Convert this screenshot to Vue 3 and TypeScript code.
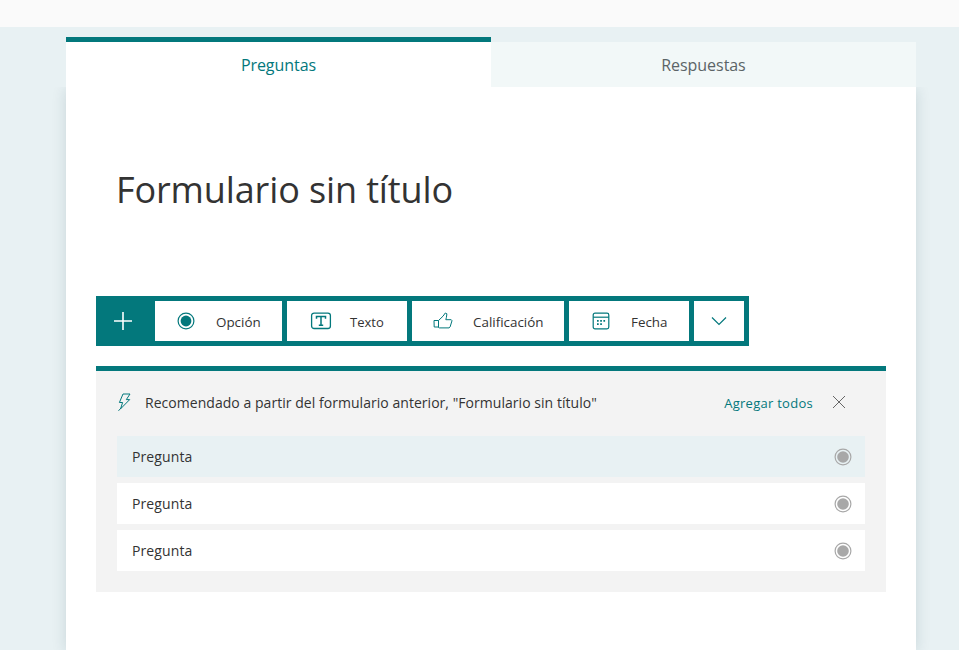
<script setup lang="ts">
const rows = [
  { label: "Pregunta", active: true },
  { label: "Pregunta", active: false },
  { label: "Pregunta", active: false },
];
</script>

<template>
  <div class="page">
    <div class="topbar"></div>
    <main class="content">
      <div class="tabs">
        <div class="tab tab-active">Preguntas</div>
        <div class="tab">Respuestas</div>
      </div>
      <section class="card">
        <h1 class="title">Formulario sin título</h1>

        <div class="toolbar">
          <button class="add" aria-label="Agregar">
            <svg width="20" height="20" viewBox="0 0 20 20">
              <path d="M10 1v18M1 10h18" stroke="#fff" stroke-width="1.6" fill="none" />
            </svg>
          </button>
          <button class="tool tool-option">
            <svg class="tool-icon" width="18" height="18" viewBox="0 0 18 18">
              <circle cx="9" cy="9" r="7.9" fill="none" stroke="#03787c" stroke-width="1.2" />
              <circle cx="9" cy="9" r="5.4" fill="#03787c" />
            </svg>
            <span>Opción</span>
          </button>
          <button class="tool tool-text">
            <svg class="tool-icon" width="22" height="18" viewBox="0 0 22 18">
              <rect x="1.6" y="1.1" width="18.8" height="15.4" rx="2.5" fill="none" stroke="#03787c" stroke-width="1.3" />
              <path d="M6.5 6.8V4.6h9v2.2M11 4.6v8.6M8.8 13.2h4.4" fill="none" stroke="#03787c" stroke-width="1.5" />
            </svg>
            <span class="label-narrow">Texto</span>
          </button>
          <button class="tool tool-rate">
            <svg class="tool-icon" width="20" height="18" viewBox="0 0 20 18">
              <path d="M1 8.5h4.5L10 4.2 12.3 1l1.6.8-.5 3.6-.6 2.3h5.4l.8 1-1.9 6.2-1 1H6.5L5 15H1.2z" fill="none" stroke="#03787c" stroke-width="1" stroke-linejoin="round" />
              <path d="M5.5 8.5V15" stroke="#03787c" stroke-width="1" />
            </svg>
            <span>Calificación</span>
          </button>
          <button class="tool tool-date">
            <svg class="tool-icon" width="18" height="18" viewBox="0 0 18 18">
              <rect x="1.2" y="1.2" width="15.6" height="15.6" rx="1.8" fill="none" stroke="#03787c" stroke-width="1.2" />
              <path d="M1.2 5.2h15.6" stroke="#03787c" stroke-width="1.2" />
              <path d="M5 8h1.7v1.7H5zM8.2 8h1.7v1.7H8.2zM11.4 8h1.7v1.7h-1.7zM5 11.2h1.7v1.7H5zM8.2 11.2h1.7v1.7H8.2z" fill="#03787c" />
            </svg>
            <span>Fecha</span>
          </button>
          <button class="tool tool-more" aria-label="Más">
            <svg width="16" height="10" viewBox="0 0 16 10">
              <path d="M1 1.5l7 7 7-7" fill="none" stroke="#03787c" stroke-width="1.2" />
            </svg>
          </button>
        </div>

        <div class="suggest">
          <div class="suggest-head">
            <svg class="bolt" width="14" height="19" viewBox="0 0 14 19">
              <path d="M6 1h7L9.3 6.6h3.4L3.6 15.8l2-6.3H2.4z" fill="none" stroke="#03787c" stroke-width="1" stroke-linejoin="round" />
              <path d="M4.4 14.6L1.5 17.8" stroke="#03787c" stroke-width="1" />
            </svg>
            <span class="suggest-text">Recomendado a partir del formulario anterior, "Formulario sin título"</span>
            <a class="add-all">Agregar todos</a>
            <svg class="close" width="14" height="14" viewBox="0 0 14 14">
              <path d="M1 1l12 12M13 1L1 13" stroke="#666" stroke-width="1" fill="none" />
            </svg>
          </div>
          <div class="rows">
            <div v-for="(row, i) in rows" :key="i" class="row" :class="{ 'row-active': row.active }">
              <span>{{ row.label }}</span>
              <svg width="18" height="18" viewBox="0 0 18 18">
                <circle cx="9" cy="9" r="7.9" fill="none" stroke="#a8a8a8" stroke-width="1.2" />
                <circle cx="9" cy="9" r="5.8" fill="#a8a8a8" />
              </svg>
            </div>
          </div>
        </div>
      </section>
    </main>
  </div>
</template>

<style scoped>
.page {
  height: 650px;
  overflow: hidden;
  background: #e8f1f3;
  font-family: "Open Sans", "Noto Sans", sans-serif;
  color: #333;
}

.topbar {
  height: 27px;
  background: #fafafa;
}

.content {
  width: 850px;
  margin-left: 66px;
  padding-top: 10px;
}

.tabs {
  display: flex;
  align-items: flex-end;
  height: 50px;
}

.tab {
  width: 425px;
  height: 45px;
  box-sizing: border-box;
  display: flex;
  align-items: center;
  justify-content: center;
  background: #f2f8f8;
  color: #5b6467;
  font-size: 16px;
  letter-spacing: -0.05px;
}

.tab-active {
  height: 50px;
  border-top: 5px solid #03787c;
  background: #fff;
  color: #03787c;
}

.card {
  height: 563px;
  padding: 0 30px;
  background: #fff;
  box-shadow: 0 2px 14px rgba(0, 60, 70, 0.14);
  clip-path: inset(0 -20px -20px -20px);
}

.title {
  margin: 0;
  padding: 78px 0 0 20px;
  height: 131px;
  font-size: 36px;
  font-weight: 400;
  line-height: 50px;
  color: #333;
  letter-spacing: -0.12px;
}

.toolbar {
  display: flex;
  gap: 5px;
  width: 653px;
  height: 50px;
  box-sizing: border-box;
  padding: 5px 5px 5px 0;
  background: #03787c;
}

.toolbar button {
  border: none;
  padding: 0;
  font-family: inherit;
  cursor: pointer;
}

.toolbar .add {
  width: 54px;
  background: transparent;
  display: flex;
  align-items: center;
  justify-content: center;
}

.tool {
  display: flex;
  align-items: center;
  background: #fff;
  color: #333;
  font-size: 13.4px;
}

.tool span {
  padding-top: 2px;
}

.tool .label-narrow {
  font-size: 13px;
}

.tool-option { width: 127px; }
.tool-text { width: 120px; }
.tool-rate { width: 152px; }
.tool-date { width: 120px; }
.tool-more { width: 50px; justify-content: center; }

.tool-option .tool-icon { margin: 0 21px 0 22px; }
.tool-text .tool-icon { margin: 0 18px 0 23px; }
.tool-rate .tool-icon { margin: 0 20px 0 21px; }
.tool-date .tool-icon { margin: 0 21px 0 23px; }

.suggest {
  margin-top: 20px;
  width: 790px;
  height: 226px;
  box-sizing: border-box;
  border-top: 5px solid #03787c;
  padding: 0 21px;
  background: #f3f3f3;
}

.suggest-head {
  display: flex;
  align-items: center;
  height: 65px;
  padding-bottom: 3px;
  box-sizing: border-box;
  font-size: 14px;
}

.bolt {
  margin-right: 14px;
}

.suggest-text {
  flex: 1;
  letter-spacing: 0.04px;
}

.add-all {
  color: #03787c;
  font-size: 13px;
  letter-spacing: 0.27px;
  margin-right: 19px;
  padding-top: 2px;
}

.close {
  margin-right: 19px;
}

.rows {
  display: flex;
  flex-direction: column;
  gap: 6px;
}

.row {
  display: flex;
  align-items: center;
  justify-content: space-between;
  height: 41px;
  padding: 0 13px 0 15px;
  background: #fff;
  font-size: 14px;
  letter-spacing: 0.1px;
}

.row-active {
  background: #e8f1f3;
}
</style>
